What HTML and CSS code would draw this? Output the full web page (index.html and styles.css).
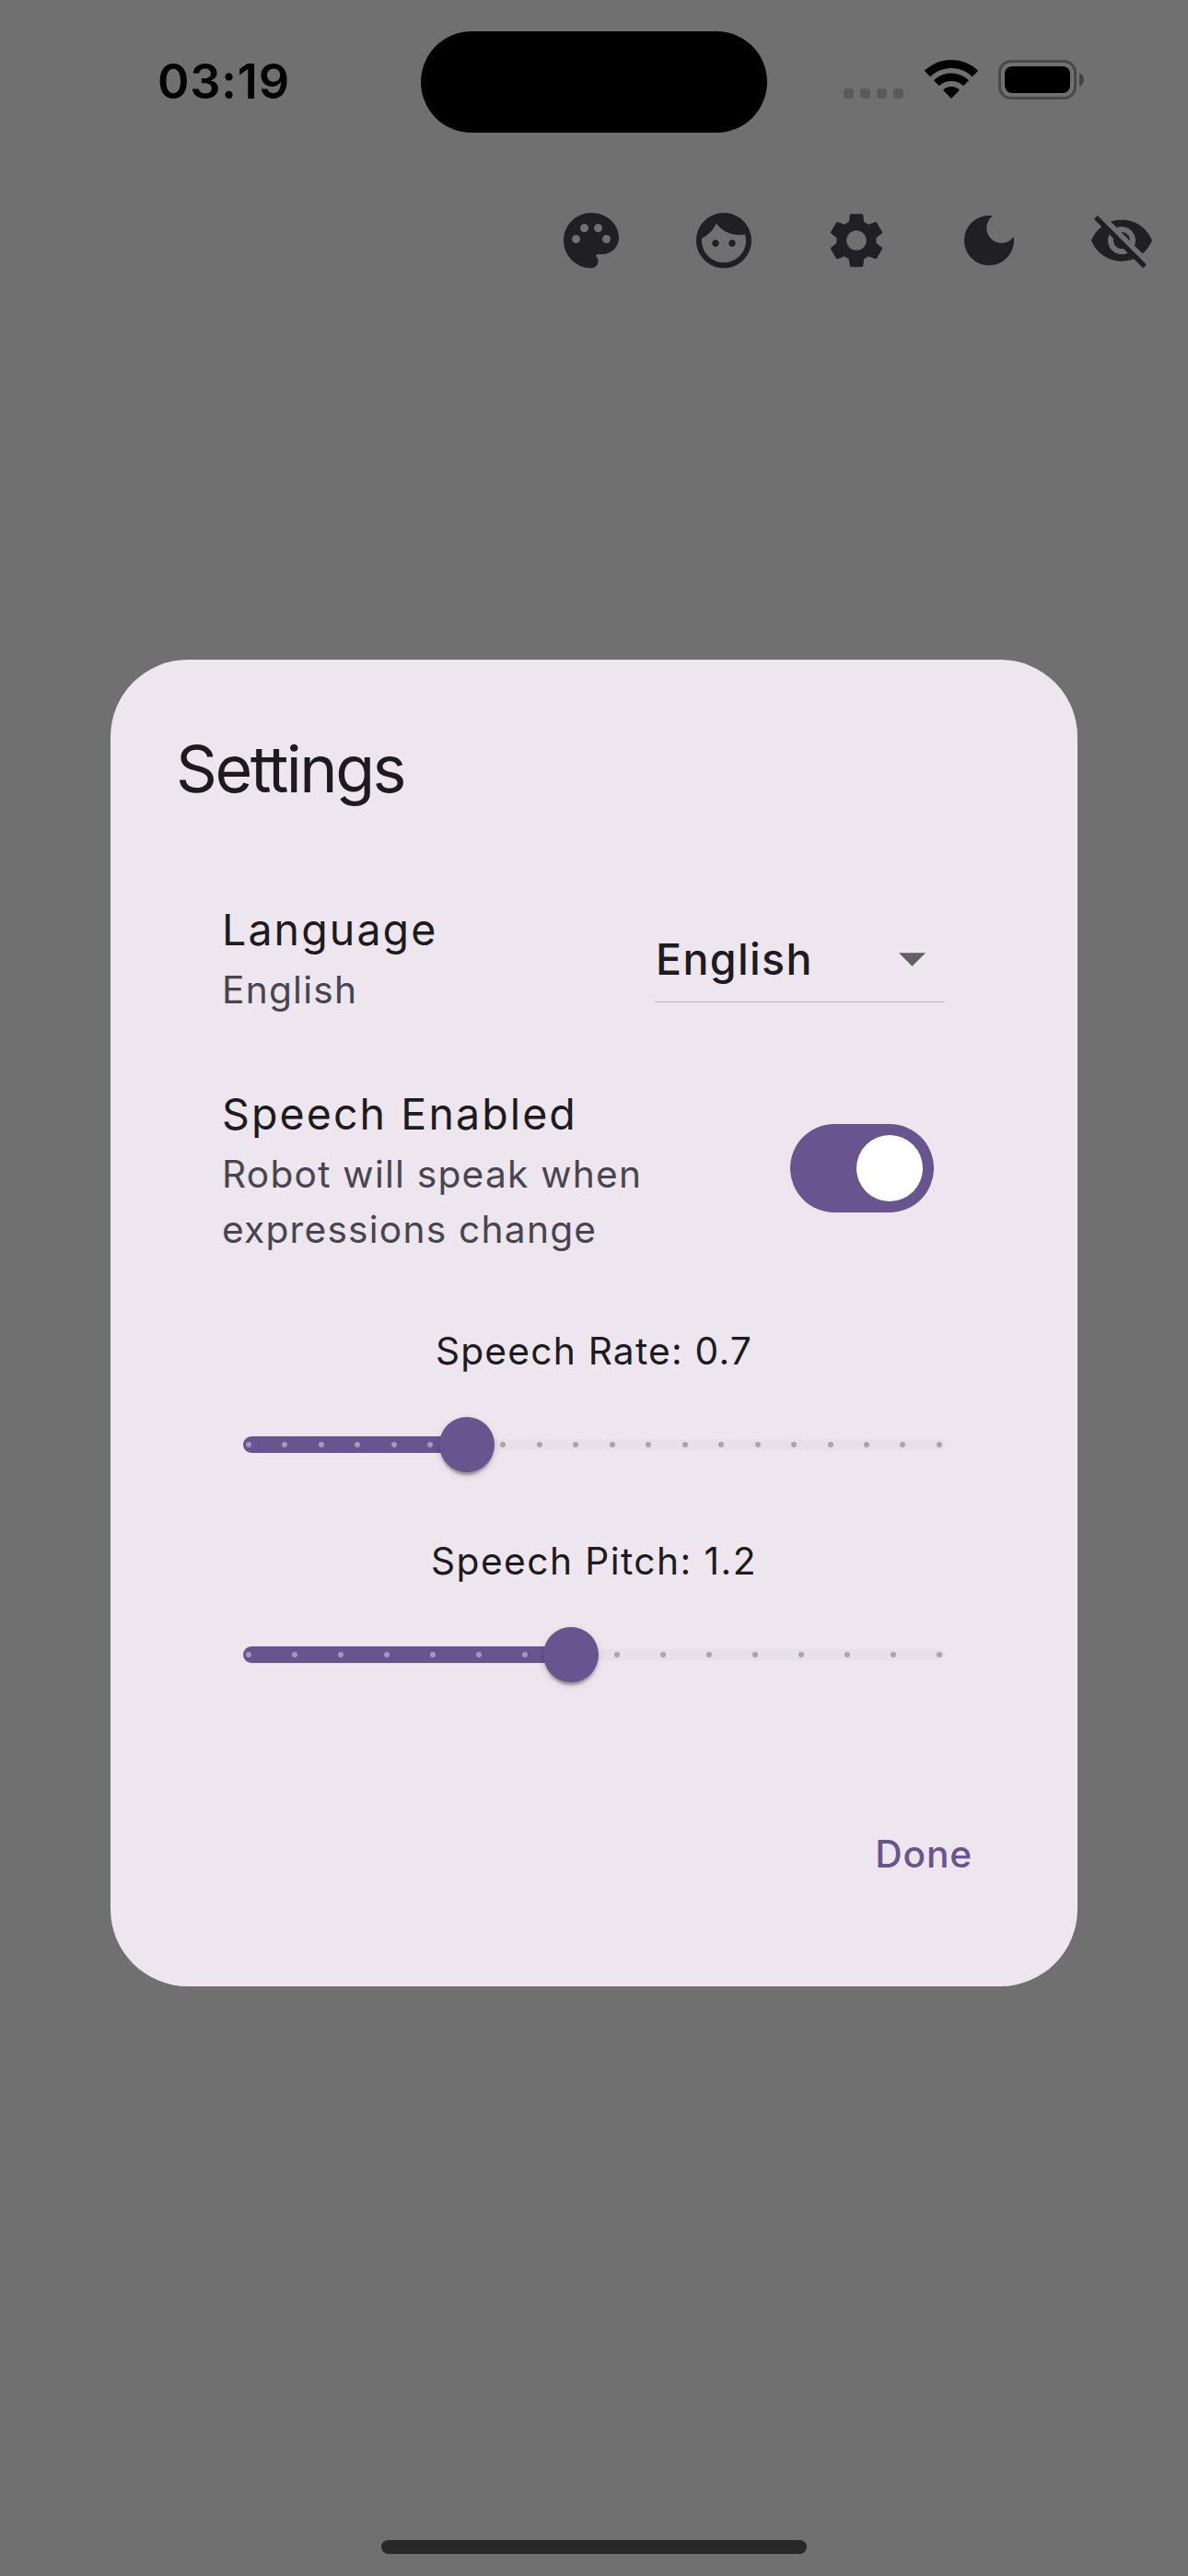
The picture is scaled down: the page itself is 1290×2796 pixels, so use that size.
FILE: index.html
```html
<!DOCTYPE html>
<html lang="en">
<head>
<meta charset="utf-8">
<title>Settings</title>
<link rel="stylesheet" href="styles.css">
</head>
<body>
<div class="screen">
  <header class="status">
    <div class="time">03:19</div>
    <div class="island"></div>
    <div class="indicators">
      <div class="signal"><i></i><i></i><i></i><i></i></div>
      <svg class="wifi" viewBox="0 0 58 42">
        <path d="M2.94 15.03A37.5 37.5 0 0 1 55.06 15.03" fill="none" stroke="#000" stroke-width="9"/>
        <path d="M12.9 25.3A23.2 23.2 0 0 1 45.1 25.3" fill="none" stroke="#000" stroke-width="8.4"/>
        <path d="M29 42L20 32.65A13 13 0 0 1 38 32.65Z"/>
      </svg>
      <svg class="battery" viewBox="0 0 94 43">
        <rect x="1.5" y="1.5" width="82" height="40" rx="12.5" fill="none" stroke="#484848" stroke-width="3"/>
        <rect x="7" y="7" width="71" height="29" rx="8"/>
        <path d="M88 14.5c3.2 1 5 3.8 5 7s-1.8 6-5 7z" fill="#404040"/>
      </svg>
    </div>
  </header>

  <nav class="actions">
    <svg viewBox="0 0 24 24"><path d="M12 2C6.49 2 2 6.49 2 12s4.49 10 10 10c1.38 0 2.5-1.12 2.5-2.5 0-.61-.23-1.2-.64-1.67-.08-.1-.13-.21-.13-.33 0-.28.22-.5.5-.5H16c3.31 0 6-2.69 6-6 0-4.96-4.49-9-10-9zm5.5 11c-.83 0-1.5-.67-1.5-1.5s.67-1.5 1.5-1.5 1.5.67 1.5 1.5-.67 1.5-1.5 1.5zm-3-4c-.83 0-1.5-.67-1.5-1.5S13.67 6 14.5 6s1.5.67 1.5 1.5S15.33 9 14.5 9zM5 11.5c0-.83.67-1.5 1.5-1.5s1.5.67 1.5 1.5S7.33 13 6.5 13 5 12.33 5 11.5zm6-4c0 .83-.67 1.5-1.5 1.5S8 8.33 8 7.5 8.67 6 9.5 6s1.5.67 1.5 1.5z"/></svg>
    <svg viewBox="0 0 24 24"><path d="M9 11.75c-.69 0-1.25.56-1.25 1.25s.56 1.25 1.25 1.25 1.25-.56 1.25-1.25-.56-1.25-1.25-1.25zm6 0c-.69 0-1.25.56-1.25 1.25s.56 1.25 1.25 1.25 1.25-.56 1.25-1.25-.56-1.25-1.25-1.25zM12 2C6.48 2 2 6.48 2 12s4.48 10 10 10 10-4.48 10-10S17.52 2 12 2zm0 18c-4.41 0-8-3.59-8-8 0-.29.02-.58.05-.86 2.36-1.05 4.23-2.98 5.21-5.37C11.07 8.33 14.05 10 17.42 10c.78 0 1.53-.09 2.25-.26.21.71.33 1.47.33 2.26 0 4.41-3.59 8-8 8z"/></svg>
    <svg viewBox="0 0 24 24"><path d="M19.14 12.94c.04-.3.06-.61.06-.94 0-.32-.02-.64-.07-.94l2.03-1.58c.18-.14.23-.41.12-.61l-1.92-3.32c-.12-.22-.37-.29-.59-.22l-2.39.96c-.5-.38-1.03-.7-1.62-.94l-.36-2.54c-.04-.24-.24-.41-.48-.41h-3.84c-.24 0-.43.17-.47.41l-.36 2.54c-.59.24-1.13.57-1.62.94l-2.39-.96c-.22-.08-.47 0-.59.22L2.74 8.87c-.12.21-.08.47.12.61l2.03 1.58c-.05.3-.09.63-.09.94s.02.64.07.94l-2.03 1.58c-.18.14-.23.41-.12.61l1.92 3.32c.12.22.37.29.59.22l2.39-.96c.5.38 1.03.7 1.62.94l.36 2.54c.05.24.24.41.48.41h3.84c.24 0 .44-.17.47-.41l.36-2.54c.59-.24 1.13-.56 1.62-.94l2.39.96c.22.08.47 0 .59-.22l1.92-3.32c.12-.22.07-.47-.12-.61l-2.01-1.58zM12 15.6c-1.98 0-3.6-1.62-3.6-3.6s1.62-3.6 3.6-3.6 3.6 1.62 3.6 3.6-1.62 3.6-3.6 3.6z"/></svg>
    <svg viewBox="0 0 24 24"><path d="M12 3c-4.97 0-9 4.03-9 9s4.03 9 9 9 9-4.03 9-9c0-.46-.04-.92-.1-1.36-.98 1.37-2.58 2.26-4.4 2.26-2.98 0-5.4-2.42-5.4-5.4 0-1.81.89-3.42 2.26-4.4-.44-.06-.9-.1-1.36-.1z"/></svg>
    <svg viewBox="0 0 24 24"><path d="M12 7c2.76 0 5 2.24 5 5 0 .65-.13 1.26-.36 1.83l2.92 2.92c1.51-1.26 2.7-2.89 3.43-4.75-1.73-4.39-6-7.5-11-7.5-1.4 0-2.74.25-3.98.7l2.16 2.16C10.74 7.13 11.35 7 12 7zM2 4.27l2.28 2.28.46.46C3.08 8.3 1.78 10.02 1 12c1.73 4.39 6 7.5 11 7.5 1.55 0 3.03-.3 4.38-.84l.42.42L19.73 22 21 20.73 3.27 3 2 4.27zM7.53 9.8l1.55 1.55c-.05.21-.08.43-.08.65 0 1.66 1.34 3 3 3 .22 0 .44-.03.65-.08l1.55 1.55c-.67.33-1.41.53-2.2.53-2.76 0-5-2.24-5-5 0-.79.2-1.53.53-2.2zm4.31-.78l3.15 3.15.02-.16c0-1.66-1.34-3-3-3l-.17.01z"/></svg>
  </nav>

  <main class="dialog">
    <h1 class="dialog-title">Settings</h1>

    <div class="tile">
      <div class="tile-text">
        <div class="tile-title">Language</div>
        <div class="tile-sub">English</div>
      </div>
      <div class="dropdown">
        <span>English</span>
        <svg viewBox="0 0 30 15"><path d="M0 0h30L15 15z"/></svg>
      </div>
    </div>

    <div class="tile">
      <div class="tile-text">
        <div class="tile-title">Speech Enabled</div>
        <div class="tile-sub">Robot will speak when<br>expressions change</div>
      </div>
      <div class="switch"><div class="switch-thumb"></div></div>
    </div>

    <section class="setting">
      <div class="label">Speech Rate: 0.7</div>
      <div class="slider">
        <div class="rail"></div>
        <div class="fill" style="width:242.8px"></div>
        <div class="ticks"><i class="on"></i><i class="on"></i><i class="on"></i><i class="on"></i><i class="on"></i><i class="on"></i><i class="on"></i><i></i><i></i><i></i><i></i><i></i><i></i><i></i><i></i><i></i><i></i><i></i><i></i><i></i></div>
        <div class="thumb" style="left:212.8px"></div>
      </div>
    </section>

    <section class="setting">
      <div class="label label-pitch">Speech Pitch: 1.2</div>
      <div class="slider">
        <div class="rail"></div>
        <div class="fill" style="width:356px"></div>
        <div class="ticks"><i class="on"></i><i class="on"></i><i class="on"></i><i class="on"></i><i class="on"></i><i class="on"></i><i class="on"></i><i class="on"></i><i></i><i></i><i></i><i></i><i></i><i></i><i></i><i></i></div>
        <div class="thumb" style="left:326px"></div>
      </div>
    </section>

    <div class="dialog-actions"><span class="done">Done</span></div>
  </main>

  <div class="home"></div>
</div>
</body>
</html>
```
FILE: styles.css
```css
* { box-sizing: border-box; }

body {
  margin: 0;
  background: #707070;
  font-family: Inter, "Liberation Sans", sans-serif;
  color: #1d1b20;
}

.screen {
  display: flex;
  flex-direction: column;
  width: 1290px;
  height: 2796px;
  overflow: hidden;
}

.status {
  display: flex;
  align-items: flex-start;
  height: 177px;
  flex: none;
}

.time {
  width: 457px;
  padding: 58px 0 0 171px;
  font-size: 52.3px;
  line-height: 60px;
  font-weight: 600;
  letter-spacing: .8px;
  color: #000;
}

.island {
  width: 376px;
  height: 110.5px;
  margin-top: 33.5px;
  border-radius: 56px;
  background: #000;
}

.indicators {
  display: flex;
  align-items: flex-end;
  height: 108px;
  margin-left: 83px;
}

.signal {
  display: flex;
  gap: 7px;
  width: 88px;
  padding-bottom: 1px;
}

.signal i {
  width: 11px;
  height: 11px;
  border-radius: 4px;
  background: #5a5a5a;
}

.wifi { width: 58px; height: 42px; margin: 0 22px 1px 0; }
.battery { width: 94px; height: 43px; }

.actions {
  display: flex;
  justify-content: flex-end;
  gap: 72px;
  height: 168px;
  flex: none;
  padding: 48px 36px 0 0;
}

.actions svg {
  width: 72px;
  height: 72px;
  fill: #201f24;
}

.dialog {
  width: 1050px;
  height: 1440px;
  flex: none;
  margin: 370.5px auto 0;
  padding: 72px;
  border-radius: 84px;
  background: #ede6ee;
}

.dialog-title {
  margin: 0 0 92px -1px;
  font-size: 70px;
  line-height: 94px;
  font-weight: 400;
  letter-spacing: -2.5px;
}

.tile {
  display: flex;
  justify-content: space-between;
  align-items: flex-start;
  margin-bottom: 69px;
  padding: 0 72px 0 49px;
}

.tile-title {
  font-size: 46.5px;
  line-height: 71px;
  letter-spacing: 2.1px;
}

.tile-sub {
  font-size: 40.7px;
  line-height: 60px;
  letter-spacing: 1.22px;
  color: #49454e;
}

.dropdown {
  display: flex;
  align-items: center;
  justify-content: space-between;
  width: 315px;
  height: 82.5px;
  margin-top: 32px;
  padding: 0 21px 10.5px 1px;
  border-bottom: 1px solid #bcb7bd;
  font-size: 46.5px;
  line-height: 71px;
  font-weight: 500;
  letter-spacing: 1.35px;
}

.dropdown svg { width: 29px; height: 15px; fill: #616161; }

.switch {
  display: flex;
  justify-content: flex-end;
  width: 156px;
  height: 96px;
  margin: 46px 12px 0 0;
  padding: 12px;
  border-radius: 48px;
  background: #68548e;
}

.switch-thumb {
  width: 72px;
  height: 72px;
  border-radius: 50%;
  background: #fff;
}

.setting { margin: 72px 0 67px; }
.setting + .setting { margin-top: 0; }

.label {
  font-size: 40.7px;
  line-height: 60px;
  letter-spacing: 1.22px;
  text-align: center;
}

.label-pitch { letter-spacing: 1.44px; }

.slider {
  position: relative;
  height: 60px;
  margin: 41px 72px 0;
}

.rail {
  position: absolute;
  inset: 24px 0;
  border-radius: 6px;
  background: #e6e0e9;
}

.fill {
  position: absolute;
  left: 0;
  top: 21px;
  height: 18px;
  border-radius: 9px;
  background: #68548e;
}

.ticks {
  position: absolute;
  inset: 27px 3px;
  display: flex;
  justify-content: space-between;
}

.ticks i {
  width: 6px;
  height: 6px;
  border-radius: 50%;
  background: #a9a4ab;
}

.ticks .on { background: #a598bc; }

.thumb {
  position: absolute;
  top: 0;
  width: 60px;
  height: 60px;
  border-radius: 50%;
  background: #68548e;
  box-shadow: 0 6px 3px -3px rgba(0, 0, 0, .2), 0 3px 3px rgba(0, 0, 0, .14), 0 3px 9px rgba(0, 0, 0, .12);
}

.dialog-actions {
  display: flex;
  justify-content: flex-end;
  padding: 90px 42px 0 0;
}

.done {
  font-size: 40.7px;
  line-height: 60px;
  font-weight: 500;
  letter-spacing: .85px;
  color: #68548e;
}

.home {
  width: 462px;
  height: 15px;
  margin: auto auto 24px;
  border-radius: 8px;
  background: #282828;
}
```
